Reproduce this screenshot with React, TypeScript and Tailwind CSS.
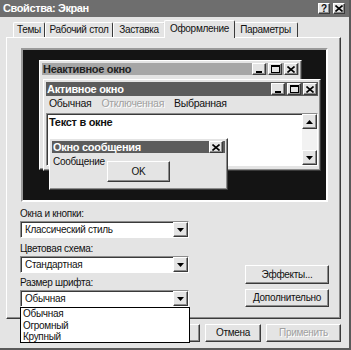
import React from "react";

const raised =
  "border border-t-white border-l-white border-r-[#3a3a3a] border-b-[#3a3a3a] shadow-[inset_-1px_-1px_0_#8c8c8c]";
const sunken =
  "border border-t-[#8c8c8c] border-l-[#8c8c8c] border-r-white border-b-white shadow-[inset_1px_1px_0_#3a3a3a]";

function TriDown() {
  return (
    <svg width="7" height="4" viewBox="0 0 7 4">
      <path d="M0 0h7L3.5 4z" fill="#000" />
    </svg>
  );
}

function TriUp() {
  return (
    <svg width="7" height="4" viewBox="0 0 7 4">
      <path d="M0 4h7L3.5 0z" fill="#000" />
    </svg>
  );
}

function MinIcon() {
  return (
    <svg width="8" height="8" viewBox="0 0 8 8">
      <rect x="1" y="6" width="6" height="2" fill="#000" />
    </svg>
  );
}

function MaxIcon() {
  return (
    <svg width="9" height="8" viewBox="0 0 9 8">
      <rect x="0.5" y="0.5" width="8" height="7" fill="none" stroke="#000" />
      <rect x="0" y="0" width="9" height="2" fill="#000" />
    </svg>
  );
}

function CloseIcon() {
  return (
    <svg width="8" height="7" viewBox="0 0 8 7">
      <path d="M0.5 0.5L7.5 6.5M7.5 0.5L0.5 6.5" stroke="#000" strokeWidth="1.6" />
    </svg>
  );
}

function CapBtn({ children }: { children: React.ReactNode }) {
  return (
    <div className={`w-[14px] h-[12px] bg-[#e4e4e4] flex items-center justify-center ${raised}`}>
      {children}
    </div>
  );
}

function Combo({ value }: { value: string }) {
  return (
    <div className={`h-[17px] w-[169px] bg-white flex items-center ${sunken}`}>
      <span className="flex-1 pl-[4px] pt-[1px] leading-none">{value}</span>
      <div className={`w-[15px] h-[15px] bg-[#e4e4e4] flex items-center justify-center ${raised}`}>
        <TriDown />
      </div>
    </div>
  );
}

export default function App() {
  const tabs = [
    { label: "Темы", w: "w-[32px]" },
    { label: "Рабочий стол", w: "w-[68px]" },
    { label: "Заставка", w: "w-[52px]" },
  ];

  return (
    <div className="w-[351px] h-[350px] bg-[#e4e4e4] border-r-2 border-b-2 border-r-[#5a5a5a] border-b-[#5a5a5a] flex flex-col text-[10px] tracking-[-0.3px] text-[#111] font-['Liberation_Sans',Arial,sans-serif] overflow-hidden">
      {/* Title bar */}
      <div className="h-[17px] bg-[#6e6e6e] flex items-center pl-[3px] pr-[4px]">
        <span className="flex-1 text-white font-bold text-[11px] tracking-[-0.4px] leading-none">Свойства: Экран</span>
        <div className="flex gap-[3px]">
          <div className={`w-[12px] h-[11px] bg-[#e4e4e4] flex items-center justify-center font-bold text-[10px] leading-none ${raised}`}>?</div>
          <div className={`w-[12px] h-[11px] bg-[#e4e4e4] flex items-center justify-center ${raised}`}>
            <CloseIcon />
          </div>
        </div>
      </div>

      <div className="pl-[6px] pr-[8px] flex flex-col">
        {/* Tabs */}
        <div className="h-[20px] pl-[7px] flex items-end">
          {tabs.map((t) => (
            <div
              key={t.label}
              className={`${t.w} h-[15px] border-t border-l border-r border-t-white border-l-white border-r-[#3a3a3a] rounded-t-[2px] flex items-center justify-center leading-none whitespace-nowrap`}
            >
              {t.label}
            </div>
          ))}
          <div className="relative z-10 w-[71px] h-[18px] -mb-[1px] -mx-[1px] bg-[#e4e4e4] border-t border-l border-r border-t-white border-l-white border-r-[#3a3a3a] rounded-t-[2px] flex items-start justify-center pt-[3px] leading-none whitespace-nowrap">
            Оформление
          </div>
          <div className="w-[64px] h-[15px] border-t border-r border-t-white border-r-[#3a3a3a] rounded-t-[2px] flex items-center justify-center leading-none whitespace-nowrap">
            Параметры
          </div>
        </div>

        {/* Panel */}
        <div className="h-[282px] border border-t-white border-l-white border-r-[#3a3a3a] border-b-[#3a3a3a] shadow-[inset_-1px_-1px_0_#8c8c8c] pt-[10px] pl-[14px]">
          {/* Preview */}
          <div className="w-[307px] h-[154px] border-2 border-t-[#9a9a9a] border-l-[#9a9a9a] border-r-white border-b-white bg-[#141414] relative">
            {/* Inactive window */}
            <div className={`absolute left-[16px] top-[10px] w-[263px] h-[110px] bg-[#e4e4e4] p-[2px] ${raised}`}>
              <div className="h-[12px] bg-[#a6a6a6] flex items-center pl-[1px] pr-[1px]">
                <span className="flex-1 font-bold text-[11px] text-[#222] leading-none">Неактивное окно</span>
                <div className="flex gap-[2px]">
                  <CapBtn><MinIcon /></CapBtn>
                  <CapBtn><MaxIcon /></CapBtn>
                  <CapBtn><CloseIcon /></CapBtn>
                </div>
              </div>
            </div>

            {/* Active window */}
            <div className={`absolute left-[20px] top-[29px] w-[278px] h-[92px] bg-[#e4e4e4] p-[2px] flex flex-col ${raised}`}>
              <div className="h-[14px] bg-[#5c5c5c] flex items-center pl-[1px] pr-[1px]">
                <span className="flex-1 font-bold text-[11px] text-white leading-none">Активное окно</span>
                <div className="flex gap-[2px]">
                  <CapBtn><MinIcon /></CapBtn>
                  <CapBtn><MaxIcon /></CapBtn>
                  <CapBtn><CloseIcon /></CapBtn>
                </div>
              </div>
              <div className="h-[15px] flex items-center gap-[10px] px-[3px] leading-none text-[10.5px]">
                <span>Обычная</span>
                <span className="text-[#a0a0a0] [text-shadow:1px_1px_0_#fff]">Отключенная</span>
                <span>Выбранная</span>
              </div>
              <div className={`mt-[2px] h-[53px] bg-white flex ${sunken}`}>
                <div className="flex-1 pl-[2px] pt-[3px] font-bold text-[11px] leading-none">Текст в окне</div>
                <div className="w-[15px] flex flex-col justify-between bg-[#f2f2f2]">
                  <div className={`h-[15px] bg-[#e4e4e4] flex items-center justify-center ${raised}`}>
                    <TriUp />
                  </div>
                  <div className={`h-[15px] bg-[#e4e4e4] flex items-center justify-center ${raised}`}>
                    <TriDown />
                  </div>
                </div>
              </div>
            </div>

            {/* Message box */}
            <div className={`absolute left-[26px] top-[88px] w-[179px] h-[52px] bg-[#e4e4e4] p-[2px] flex flex-col ${raised}`}>
              <div className="h-[12px] bg-[#5c5c5c] flex items-center pl-[1px] pr-[2px]">
                <span className="flex-1 font-bold text-[11px] text-white leading-none">Окно сообщения</span>
                <CapBtn><CloseIcon /></CapBtn>
              </div>
              <div className="flex items-start">
                <span className="w-[55px] pl-[1px] pt-[4px] leading-none whitespace-nowrap">Сообщение</span>
                <div className={`mt-[8px] w-[63px] h-[21px] bg-[#e4e4e4] flex items-center justify-center leading-none ${raised}`}>
                  OK
                </div>
              </div>
            </div>
          </div>

          {/* Controls */}
          <div className="flex items-end -ml-[1px]">
            <div className="flex flex-col w-[169px]">
              <span className="mt-[5px] leading-[13px]">Окна и кнопки:</span>
              <div className="mt-[1px]"><Combo value="Классический стиль" /></div>
              <span className="mt-[4px] leading-[13px]">Цветовая схема:</span>
              <div className="mt-[1px]"><Combo value="Стандартная" /></div>
              <span className="mt-[3px] leading-[13px]">Размер шрифта:</span>
              <div className="relative mt-[1px]">
                <Combo value="Обычная" />
                <div className="absolute z-20 left-0 top-[17px] w-[170px] h-[36px] bg-white border border-black flex flex-col pl-[2px] leading-[11.5px]">
                  <span>Обычная</span>
                  <span>Огромный</span>
                  <span>Крупный</span>
                </div>
              </div>
            </div>
            <div className="ml-[56px] flex flex-col gap-[5px]">
              <div className={`w-[84px] h-[19px] flex items-center justify-center leading-none ${raised}`}>Эффекты...</div>
              <div className={`w-[84px] h-[18px] flex items-center justify-center leading-none ${raised}`}>Дополнительно</div>
            </div>
          </div>
        </div>

        {/* Bottom buttons */}
        <div className="mt-[5px] flex justify-end gap-[5px]">
          <div className={`w-[56px] h-[18px] flex items-center justify-center leading-none ${raised}`}>OK</div>
          <div className={`w-[56px] h-[18px] flex items-center justify-center leading-none ${raised}`}>Отмена</div>
          <div className={`w-[75px] h-[18px] flex items-center justify-center leading-none text-[#a0a0a0] [text-shadow:1px_1px_0_#fff] ${raised}`}>Применить</div>
        </div>
      </div>
    </div>
  );
}
